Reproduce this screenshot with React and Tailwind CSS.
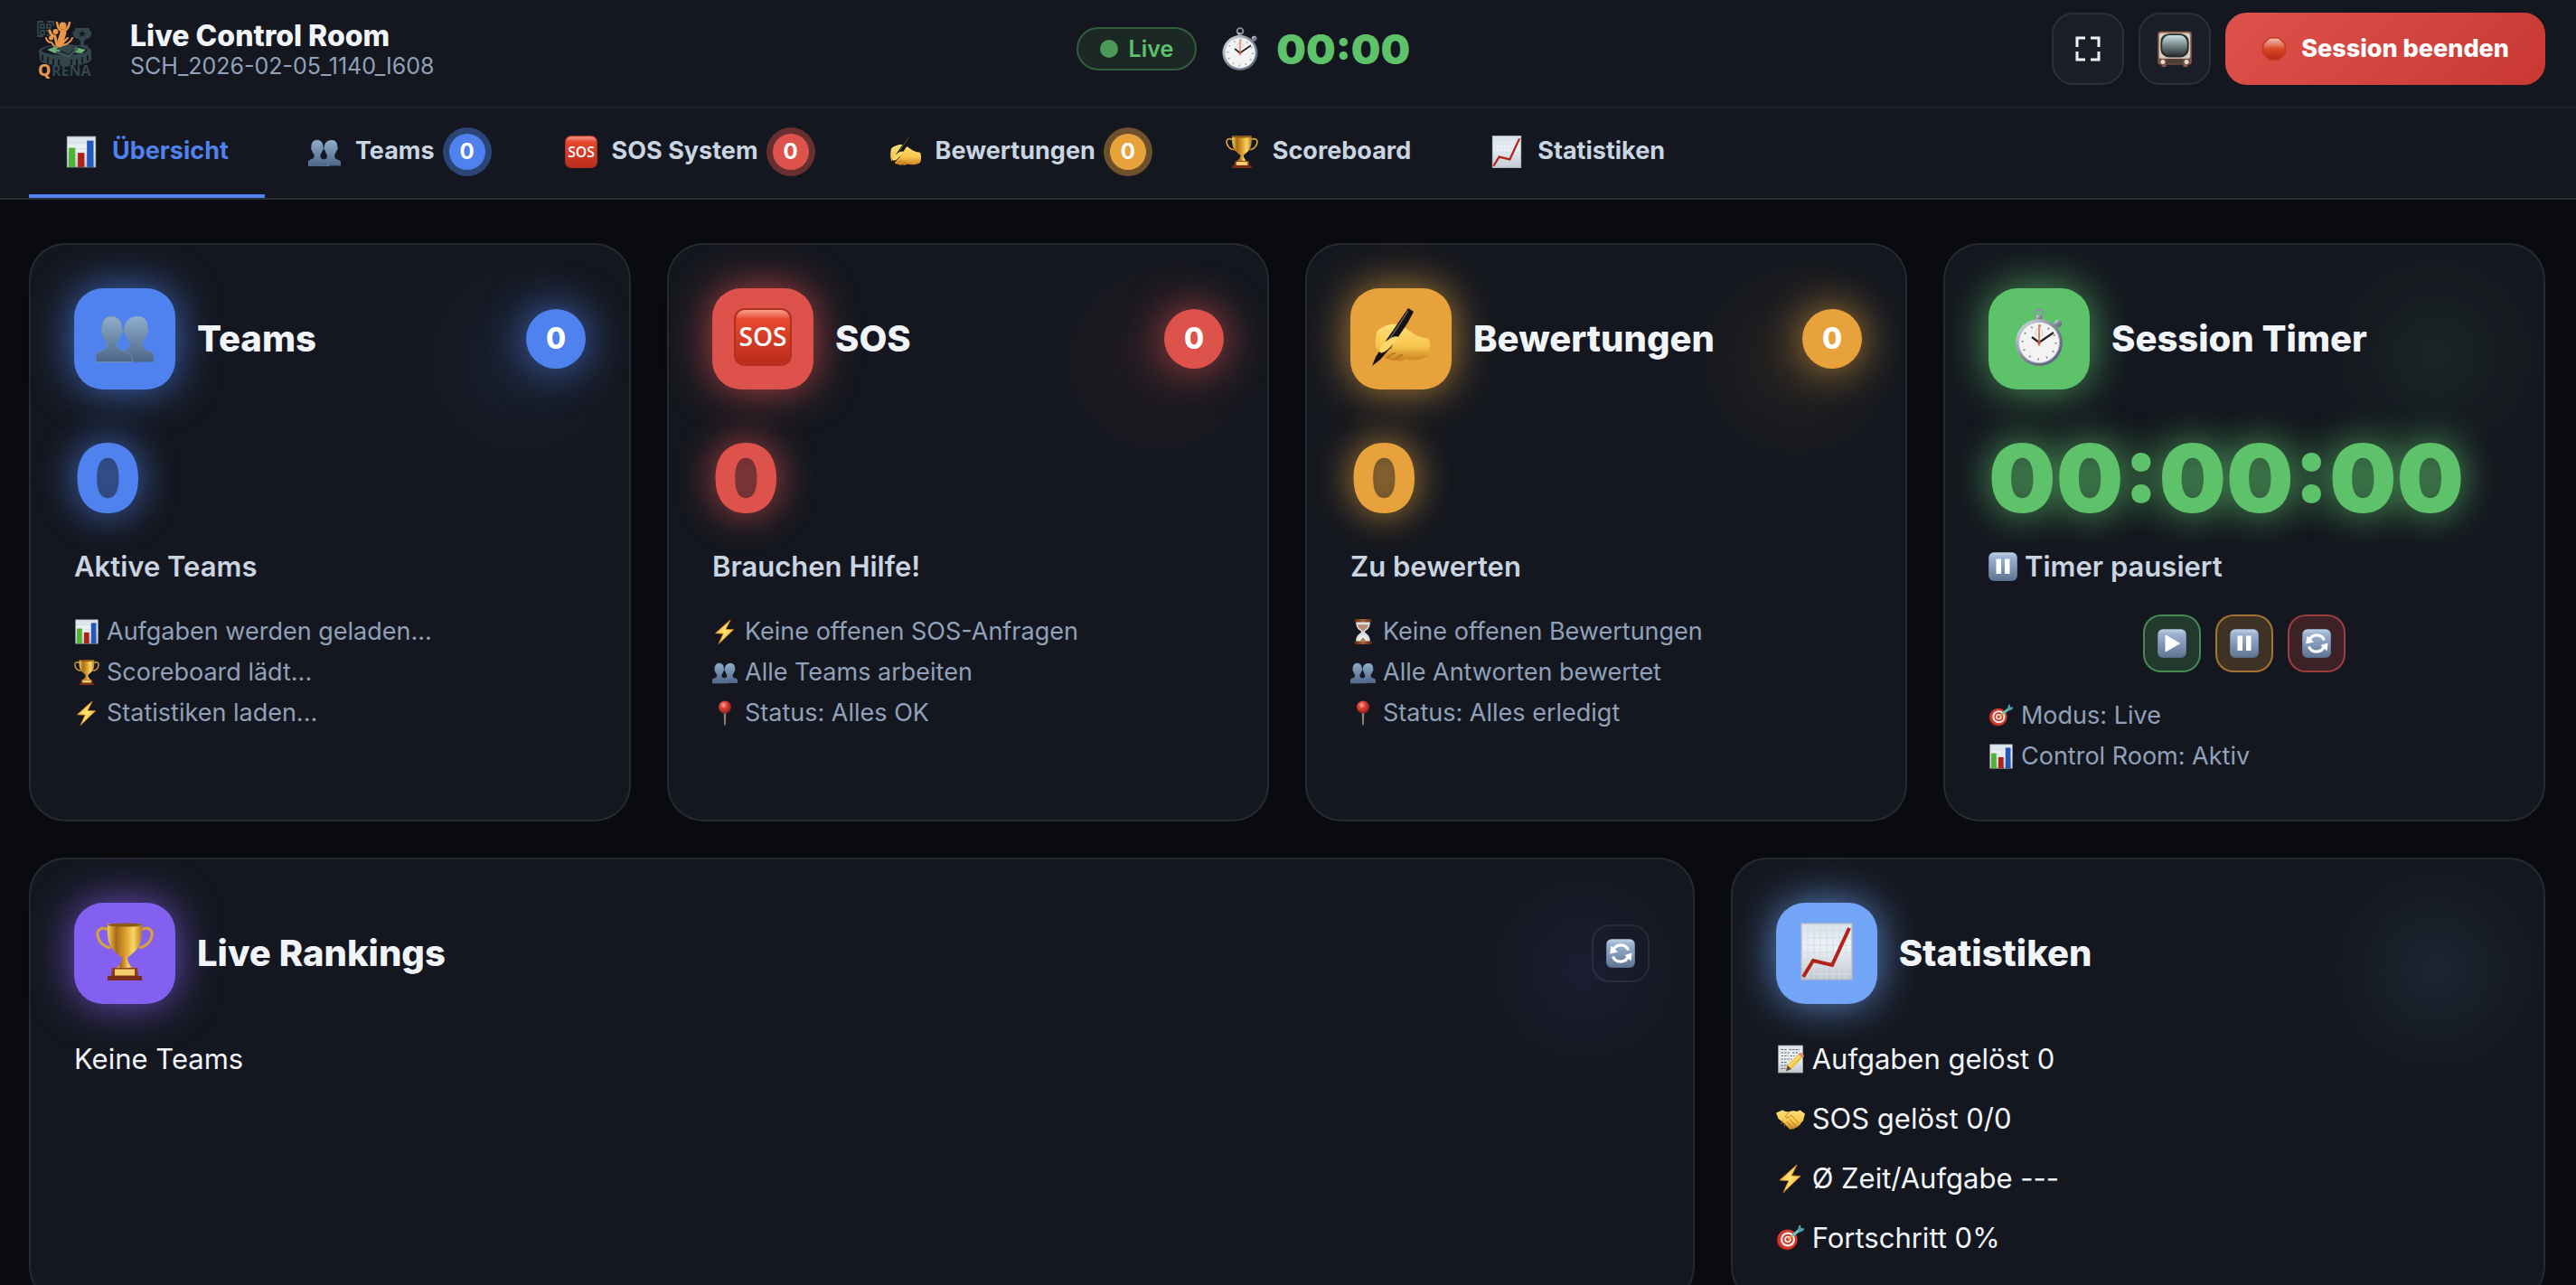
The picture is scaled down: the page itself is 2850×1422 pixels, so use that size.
import React from "react";

// shared gradients for all emoji style icons
const IconDefs = () => (
  <svg className="absolute h-0 w-0" aria-hidden="true">
    <defs>
      <linearGradient id="g-tile" x1="0" y1="0" x2="0" y2="1">
        <stop offset="0" stopColor="#c3d3e6" />
        <stop offset=".16" stopColor="#9db3d0" />
        <stop offset=".55" stopColor="#8097b8" />
        <stop offset="1" stopColor="#617590" />
      </linearGradient>
      <linearGradient id="g-paper" x1="0" y1="0" x2="0" y2="1">
        <stop offset="0" stopColor="#d9e2ea" />
        <stop offset=".4" stopColor="#eef2f6" />
        <stop offset="1" stopColor="#c3c8cf" />
      </linearGradient>
      <linearGradient id="g-people" x1="0" y1="0" x2="0" y2="1">
        <stop offset="0" stopColor="#8fafcb" />
        <stop offset="1" stopColor="#4d6688" />
      </linearGradient>
      <linearGradient id="g-red" x1="0" y1="0" x2="0" y2="1">
        <stop offset="0" stopColor="#f3a08f" />
        <stop offset=".17" stopColor="#e8492f" />
        <stop offset="1" stopColor="#b92c1b" />
      </linearGradient>
      <linearGradient id="g-skin" x1="0" y1="0" x2="0" y2="1">
        <stop offset="0" stopColor="#fde07a" />
        <stop offset=".6" stopColor="#f7c64c" />
        <stop offset="1" stopColor="#c97f22" />
      </linearGradient>
      <linearGradient id="g-gold" x1="0" y1="0" x2="1" y2="0">
        <stop offset="0" stopColor="#f5cf55" />
        <stop offset=".25" stopColor="#a86a17" />
        <stop offset=".5" stopColor="#d99b2b" />
        <stop offset=".75" stopColor="#f8d765" />
        <stop offset="1" stopColor="#b87a1c" />
      </linearGradient>
      <linearGradient id="g-steel" x1="0" y1="0" x2="1" y2="1">
        <stop offset="0" stopColor="#e1e7ee" />
        <stop offset=".5" stopColor="#7e8794" />
        <stop offset="1" stopColor="#4c5a74" />
      </linearGradient>
      <linearGradient id="g-screen" x1="0" y1="0" x2="0" y2="1">
        <stop offset="0" stopColor="#cfe4e4" />
        <stop offset=".5" stopColor="#76878a" />
        <stop offset="1" stopColor="#2c3133" />
      </linearGradient>
      <linearGradient id="g-stop" x1="0" y1="0" x2="0" y2="1">
        <stop offset="0" stopColor="#f1bfb2" />
        <stop offset=".5" stopColor="#d84a28" />
        <stop offset="1" stopColor="#b7280f" />
      </linearGradient>
      <linearGradient id="g-bolt" x1="0" y1="0" x2="1" y2="1">
        <stop offset="0" stopColor="#f29a2e" />
        <stop offset=".5" stopColor="#ffe773" />
        <stop offset="1" stopColor="#ee8a22" />
      </linearGradient>
      <radialGradient id="g-pin" cx=".4" cy=".35" r=".6">
        <stop offset="0" stopColor="#f9aaa0" />
        <stop offset=".45" stopColor="#dd4238" />
        <stop offset="1" stopColor="#9d201d" />
      </radialGradient>
      <linearGradient id="g-wood" x1="0" y1="0" x2="1" y2="0">
        <stop offset="0" stopColor="#4e2410" />
        <stop offset=".5" stopColor="#a5623a" />
        <stop offset="1" stopColor="#4e2410" />
      </linearGradient>
    </defs>
  </svg>
);

const Svg = ({ className, children }) => (
  <svg viewBox="0 0 64 64" className={`shrink-0 ${className}`} aria-hidden="true">
    {children}
  </svg>
);

const BarsIcon = ({ className }) => (
  <Svg className={className}>
    <rect x="4" y="2" width="56" height="60" fill="url(#g-paper)" stroke="#aab4be" strokeWidth="1.5" />
    <path d="M4 14h56M4 26h56M4 38h56M4 50h56" stroke="#c3ccd6" strokeWidth="1" />
    <rect x="7" y="24" width="13" height="38" fill="#4fb434" />
    <rect x="25" y="34" width="13" height="28" fill="#ae2219" />
    <rect x="43" y="10" width="13" height="52" fill="#2257be" />
  </Svg>
);

const PeopleIcon = ({ className }) => (
  <Svg className={className}>
    <path
      d="M46 9c8 0 12 6 11.500 14 1.500 1 .5 6-1.500 6.500-1 4-3 6.500-4 8-1 5 1 8 4 9 5 2 8 2.500 8 6v7H32V47c3-1 6-3 5-9-2-2-3-5-4-9-2-.5-3-5-1.500-6C32 14 38 9 46 9z"
      fill="url(#g-people)"
    />
    <path
      d="M17 9c8 0 12.500 6 12 14 1.500 1 .5 6-1.500 6.500-1 4-3 6.500-4 8-1 5 1 8 4 9 8 2 13 3 13 13H0v-7c0-3.500 4-4.500 8-6 3-1 5-4 4-9-2-2-3-4-4-8-2-.5-3-5.500-1.500-6.500C6 15 10 9 17 9z"
      fill="url(#g-people)"
      stroke="#6e8dae"
      strokeWidth="1"
    />
  </Svg>
);

const SosIcon = ({ className }) => (
  <Svg className={className}>
    <rect x="0" y="0" width="64" height="64" rx="12" fill="#b3301f" />
    <rect x="2" y="2" width="60" height="60" rx="10" fill="url(#g-red)" />
    <text x="32" y="42" textAnchor="middle" fontFamily="'Open Sans', sans-serif" fontWeight="600" fontSize="28" fill="#fff">
      SOS
    </text>
  </Svg>
);

const HandIcon = ({ className }) => (
  <Svg className={className}>
    <path
      d="M5 27c1-4 8-7 15-9 5-1 10 0 15 3 8 5 16 12 25 12 3 0 4 3 4 8 0 7 0 12-3 13-8 4-17 4-24 2-4 3-8 3-10 1-3 2-7 1-8-1-4 1-7-1-7-4-5 0-8-2-7-5-2-6-1-13 0-20z"
      fill="url(#g-skin)"
    />
    <path d="M10 51c3-5 8-7 12-7M17 56c2-4 6-6 9-6M26 57c2-3 5-5 8-5" fill="none" stroke="#b97a20" strokeWidth="2" />
    <path d="M40 0l6 4-7 13-17 25L9 57l-9 7 4-10 12-19z" fill="#15120f" />
    <path d="M40 3L17 38" stroke="#5d5a57" strokeWidth="1.500" />
    <path d="M8 48c0-6 4-10 10-13 4-3 9-5 11-3s-3 6-8 10c-4 5-11 10-13 6z" fill="#fbd768" />
  </Svg>
);

const TrophyIcon = ({ className }) => (
  <Svg className={className}>
    <path
      d="M14 8C6 4 1 8 2 14c1 8 8 13 14 14M50 8c8-4 13 0 12 6-1 8-8 13-14 14"
      fill="none"
      stroke="#d9a236"
      strokeWidth="3"
    />
    <path d="M13 1h38c1 14-1 26-8 31-3 2-5 5-7 6h-8c-2-1-4-4-7-6C14 27 12 15 13 1z" fill="url(#g-gold)" />
    <ellipse cx="32" cy="2.500" rx="19" ry="2" fill="#8a5a17" />
    <path d="M29 37h6c0 5 1 9 6 13H23c5-4 6-8 6-13z" fill="url(#g-gold)" />
    <path d="M18 50h28l1 9H17z" fill="#8e3c1b" />
    <rect x="21" y="51.500" width="22" height="7" fill="#f3cc6c" />
    <path d="M13 59h38v5H13z" fill="#7a2d16" />
  </Svg>
);

const ChartIcon = ({ className }) => (
  <Svg className={className}>
    <rect x="4" y="1" width="56" height="62" fill="url(#g-paper)" stroke="#b3bac3" strokeWidth="1.500" />
    <path
      d="M4 9h56M4 17h56M4 25h56M4 33h56M4 41h56M4 49h56M4 57h56M11 1v62M18 1v62M25 1v62M32 1v62M39 1v62M46 1v62M53 1v62"
      stroke="#d3dde8"
      strokeWidth="1"
    />
    <path d="M6 60l11-18 21 5L57 6" fill="none" stroke="#b3221a" strokeWidth="4" />
  </Svg>
);

const StopwatchIcon = ({ className }) => (
  <Svg className={className}>
    <circle cx="32" cy="6" r="4.500" fill="none" stroke="#8b95a3" strokeWidth="2.500" />
    <rect x="29" y="8" width="6" height="6" fill="url(#g-steel)" />
    <circle cx="53" cy="17" r="4" fill="url(#g-steel)" />
    <path d="M48 22l4-4" stroke="#77828f" strokeWidth="3" />
    <circle cx="32" cy="38" r="26" fill="url(#g-steel)" />
    <circle cx="32" cy="38" r="22.500" fill="#f3f3f3" stroke="#b9c2cf" strokeWidth="1" />
    <circle cx="32" cy="38" r="18.500" fill="none" stroke="#8f8f8f" strokeWidth="2.500" strokeDasharray="1.500 8.190" />
    <circle cx="32" cy="27" r="4" fill="none" stroke="#cfcfcf" strokeWidth="1.200" />
    <path d="M32 42V18" stroke="#e08a5c" strokeWidth="2" />
    <path d="M32 38l-8-6M32 38l16-11" stroke="#222" strokeWidth="2.200" />
    <circle cx="32" cy="38" r="2" fill="#c5562b" />
  </Svg>
);

const TvIcon = ({ className }) => (
  <Svg className={className}>
    <path d="M9 58h8v6H9zM47 58h8v6h-8z" fill="#8a5747" />
    <rect x="2" y="1" width="60" height="59" rx="5" fill="#8d5b4c" />
    <rect x="4.500" y="4" width="55" height="45" rx="4" fill="#d6cfc0" />
    <rect x="7" y="5" width="50" height="42" rx="15" fill="#272b2c" />
    <rect x="10" y="8" width="44" height="36" rx="13" fill="url(#g-screen)" />
    <rect x="5" y="50" width="54" height="9" fill="#6c4b40" />
    <rect x="18" y="50" width="28" height="8" fill="#4a3f39" />
    <circle cx="11" cy="55" r="4" fill="#e5dfd0" />
    <circle cx="53" cy="55" r="4" fill="#e5dfd0" />
  </Svg>
);

const StopIcon = ({ className }) => (
  <Svg className={className}>
    <path d="M20 2h24l18 18v24L44 62H20L2 44V20z" fill="#c93a22" />
    <path d="M21 6h22l15 15v22L43 58H21L6 43V21z" fill="url(#g-stop)" />
  </Svg>
);

const BoltIcon = ({ className }) => (
  <Svg className={className}>
    <path d="M46 2L8 36l20 1-12 26 38-36-20-1z" fill="url(#g-bolt)" stroke="#d98624" strokeWidth="2" />
  </Svg>
);

const PinIcon = ({ className }) => (
  <Svg className={className}>
    <path d="M29 28h6l-1 33c-1 3-3 3-4 0z" fill="#8d8179" />
    <circle cx="32" cy="17" r="16" fill="url(#g-pin)" />
  </Svg>
);

const HourglassIcon = ({ className }) => (
  <Svg className={className}>
    <path d="M14 6h36c0 12-3 18-13 25v3c10 7 13 12 13 24H14c0-12 3-17 13-24v-3C17 24 14 18 14 6z" fill="#dfe0e2" />
    <path d="M18 14h28c-2 7-5 10-12 15l-2 4-2-4c-7-5-10-8-12-15z" fill="#b98d74" />
    <path d="M32 40l13 16H19z" fill="#f5f2ec" />
    <path d="M32 34v12l8 10H24l8-10z" fill="#a9825b" />
    <rect x="9" y="0" width="46" height="8" rx="3" fill="url(#g-wood)" />
    <rect x="9" y="56" width="46" height="8" rx="3" fill="url(#g-wood)" />
  </Svg>
);

const Tile = ({ className, children }) => (
  <Svg className={className}>
    <rect x="0" y="0" width="64" height="64" rx="12" fill="#566b88" />
    <rect x="1" y="1" width="62" height="61" rx="11" fill="url(#g-tile)" />
    {children}
  </Svg>
);

const PauseIcon = ({ className }) => (
  <Tile className={className}>
    <path d="M17 15h11v33H17zM36 15h11v33H36z" fill="#fff" />
  </Tile>
);

const PlayIcon = ({ className }) => (
  <Tile className={className}>
    <path d="M18 14l31 18-31 18z" fill="#fff" stroke="#fff" strokeWidth="2" strokeLinejoin="round" />
  </Tile>
);

const RefreshIcon = ({ className }) => (
  <Tile className={className}>
    <path d="M15 27a18 18 0 0 1 34-2M49 37a18 18 0 0 1-34 2" fill="none" stroke="#fff" strokeWidth="6.500" />
    <path d="M11 16l1 0 14 13-18 4zM57 31l-2 18-14-13z" fill="#fff" />
  </Tile>
);

const DartIcon = ({ className }) => (
  <Svg className={className}>
    <ellipse cx="24" cy="37" rx="23" ry="22" fill="#7c1a12" />
    <circle cx="25" cy="35" r="22" fill="#d13a2c" />
    <circle cx="26" cy="35" r="16" fill="#f3ece8" />
    <circle cx="26" cy="35" r="11.500" fill="#c7382b" />
    <circle cx="26" cy="35" r="7.500" fill="#f3ece8" />
    <circle cx="26" cy="35" r="4" fill="#c7382b" />
    <path d="M27 35l10-9" stroke="#d9a52c" strokeWidth="3.500" />
    <path d="M36 27l17-14" stroke="#6cc4c8" strokeWidth="6" />
    <path d="M48 17l2-12 4-2 1 7 8 1-3 5-9 4z" fill="#4ea3ab" />
  </Svg>
);

const MemoIcon = ({ className }) => (
  <Svg className={className}>
    <rect x="5" y="2" width="54" height="60" fill="url(#g-paper)" stroke="#a6a6a6" strokeWidth="1.500" />
    <path
      d="M11 11h14M29 11h23M11 18h20M36 18h12M11 25h16M31 25h10M11 32h24M11 39h12M11 46h16M11 53h10"
      stroke="#6c6c6c"
      strokeWidth="2"
      strokeDasharray="5 2"
    />
    <path d="M22 59l3-13L49 21l9 8-24 25z" fill="#f2c23c" />
    <path d="M28 49l25-25" stroke="#fbe38a" strokeWidth="3" />
    <path d="M22 59l3-13 9 8z" fill="#5c4a35" />
    <path d="M49 21l5-3c4 0 8 4 8 8l-4 3z" fill="#e3837d" />
  </Svg>
);

const HandshakeIcon = ({ className }) => (
  <Svg className={className}>
    <path
      d="M0 19l14-6c4 2 9 5 16 3 5-2 11-2 16 0l7-3 11 8-4 15-6 7c0 3-3 5-5 4-1 4-4 5-6 4-2 4-5 4-7 3-3 3-7 2-8-1l-14-14-9-7z"
      fill="url(#g-skin)"
    />
    <path
      d="M29 17c-4 4-8 8-8 11 4 4 9 0 12-4l18 18M30 33l14 15M24 38l13 14M16 36c-3 3-5 5-4 8M22 41c-3 3-5 5-3 8"
      fill="none"
      stroke="#b97718"
      strokeWidth="2"
    />
  </Svg>
);

const FullscreenIcon = ({ className }) => (
  <svg viewBox="0 0 28 28" className={className} fill="none" stroke="currentColor" strokeWidth="3" aria-hidden="true">
    <path d="M2 12V2h9M17 2h9v10M26 17v9h-9M11 26H2v-9" />
  </svg>
);

const Logo = ({ className }) => (
  <svg viewBox="0 0 80 80" className={className} role="img" aria-label="QRENA">
    <g fill="none" stroke="#32464c" strokeWidth="1.800">
      <path d="M26 10h-6M16 10h-6v16h6M23 10h4v5" />
      <rect x="13" y="13" width="4" height="4" />
      <rect x="20" y="13" width="4" height="4" />
      <rect x="13" y="20" width="4" height="4" />
      <path d="M19 20h3v3M20 25h3" />
    </g>
    <g fill="#32464c">
      <path d="M51 17h16v3c4-1 3 9-4 9-2 3-2 3-2 7h4v4H53v-4h4c0-4 0-4-2-7-8 0-8-10-4-9z" />
      <path d="M11 42c2-9 57-9 58 0v10c-3 9-54 9-57 0z" />
    </g>
    <path d="M59 19l1 3h3l-2 2 1 3-3-2-3 2 1-3-2-2h3z" fill="#14171f" />
    <path d="M14 42c6-8 45-8 51 0-6 6-45 7-51 0z" fill="#14171f" />
    <path d="M20 41l10-4 8 4-9 4zM51 38l12 3-5 4-8-1z" fill="#6fae74" />
    <path d="M30 40l11-6 13 3-10 9z" fill="#32464c" />
    <path d="M30 42l14 5 10-9v3l-10 9-14-5z" fill="#40575e" />
    <path d="M15 47v6M21 49v7M27 51v7M33 52v6M47 52v6M53 51v7M59 49v7M65 47v6" stroke="#14171f" strokeWidth="1.800" />
    <g fill="#e8964a">
      <circle cx="37.500" cy="14.500" r="4" />
      <circle cx="29.500" cy="21" r="3" />
      <circle cx="24.500" cy="28" r="2.500" />
    </g>
    <g fill="none" stroke="#e8964a" strokeLinecap="round">
      <path d="M31 11c1 6 3 9 6 9 4 0 7-3 8-9" strokeWidth="2.500" />
      <path d="M38 22l-4 13" strokeWidth="7" />
      <path d="M23 20c1 5 3 6 6 6M29 27l2 9" strokeWidth="3" />
      <path d="M19 28c1 4 3 5 6 5l3 4M37 35c2-4 4-5 6-7M38 36c5-1 9-5 10-8" strokeWidth="2" />
    </g>
    <text x="10" y="70" fontFamily="'Noto Sans', sans-serif" fontWeight="800" fontSize="18" fill="#e8964a">
      Q
    </text>
    <text x="25" y="70" fontFamily="'Noto Sans', sans-serif" fontWeight="700" fontSize="16" fill="#32464c">
      RENA
    </text>
  </svg>
);

const tabs = [
  { label: "Übersicht", Icon: BarsIcon, active: true },
  { label: "Teams", Icon: PeopleIcon, count: 0, badge: "bg-[#4f82ee] shadow-[0_0_0_7px_rgba(79,130,238,0.42)]" },
  { label: "SOS System", Icon: SosIcon, count: 0, badge: "bg-[#de524c] shadow-[0_0_0_7px_rgba(222,82,76,0.42)]" },
  { label: "Bewertungen", Icon: HandIcon, count: 0, badge: "bg-[#e8a23c] shadow-[0_0_0_7px_rgba(232,162,60,0.42)]" },
  { label: "Scoreboard", Icon: TrophyIcon },
  { label: "Statistiken", Icon: ChartIcon },
];

const themes = {
  blue: {
    card: "bg-[radial-gradient(circle_120px_at_calc(100%-120px)_128px,rgba(79,130,238,0.08),transparent)]",
    solid: "bg-[#4f82ee] shadow-[0_0_48px_rgba(79,130,238,0.8)]",
    text: "text-[#4f82ee] [text-shadow:0_0_40px_rgba(79,130,238,0.95)]",
  },
  red: {
    card: "bg-[radial-gradient(circle_120px_at_calc(100%-120px)_128px,rgba(222,82,76,0.07),transparent)]",
    solid: "bg-[#de524c] shadow-[0_0_48px_rgba(222,82,76,0.8)]",
    text: "text-[#de524c] [text-shadow:0_0_40px_rgba(222,82,76,0.95)]",
  },
  orange: {
    card: "bg-[radial-gradient(circle_120px_at_calc(100%-120px)_128px,rgba(232,162,60,0.08),transparent)]",
    solid: "bg-[#e8a23c] shadow-[0_0_48px_rgba(232,162,60,0.8)]",
    text: "text-[#e8a23c] [text-shadow:0_0_40px_rgba(232,162,60,0.95)]",
  },
  green: {
    card: "bg-[radial-gradient(circle_120px_at_calc(100%-120px)_122px,rgba(94,194,106,0.08),transparent)]",
    solid: "bg-[#5ec26a] shadow-[0_0_48px_rgba(94,194,106,0.8)]",
    text: "text-[#5ec26a] [text-shadow:0_0_40px_rgba(94,194,106,0.95)]",
  },
  purple: {
    card: "bg-[radial-gradient(circle_120px_at_calc(100%-120px)_122px,rgba(112,90,230,0.09),transparent)]",
    solid: "bg-[#8460f0] shadow-[0_0_48px_rgba(132,96,240,0.8)]",
  },
  sky: {
    card: "bg-[radial-gradient(circle_120px_at_calc(100%-120px)_122px,rgba(94,165,217,0.1),transparent)]",
    solid: "bg-[#72a5f7] shadow-[0_0_48px_rgba(114,165,247,0.8)]",
  },
};

const Card = ({ theme, title, Icon, action, span, children }) => (
  <section className={`rounded-[40px] border-2 border-white/8 bg-[#14171f] p-12 ${span} ${themes[theme].card}`}>
    <div className="flex items-center gap-6">
      <div className={`flex size-28 items-center justify-center rounded-[32px] pb-1 ${themes[theme].solid}`}>
        <Icon className="size-16" />
      </div>
      <h2 className="flex-1 text-[40px] leading-[48px] font-extrabold text-slate-100">{title}</h2>
      {action}
    </div>
    {children}
  </section>
);

const CountBadge = ({ theme, value }) => (
  <span
    className={`flex size-[66px] items-center justify-center rounded-full text-[32px] font-extrabold text-white ${themes[theme].solid}`}
  >
    {value}
  </span>
);

const BigNumber = ({ theme, children }) => (
  <div className={`mt-[42px] text-[105px] leading-[112px] font-black ${themes[theme].text}`}>{children}</div>
);

const CardLabel = ({ children }) => (
  <div className="mt-[18px] flex items-center gap-2 text-[31px] leading-[48px] font-semibold text-slate-300">
    {children}
  </div>
);

const InfoList = ({ items }) => (
  <ul className="mt-[25px] text-[27px] leading-[45px] text-slate-400">
    {items.map(([Icon, text]) => (
      <li key={text} className="flex items-center gap-2">
        <Icon className="size-7" />
        {text}
      </li>
    ))}
  </ul>
);

const StatCard = ({ theme, title, Icon, value, label, items }) => (
  <Card theme={theme} title={title} Icon={Icon} span="col-span-3" action={<CountBadge theme={theme} value={value} />}>
    <BigNumber theme={theme}>{value}</BigNumber>
    <CardLabel>{label}</CardLabel>
    <InfoList items={items} />
  </Card>
);

const IconButton = ({ label, className, children }) => (
  <button
    type="button"
    aria-label={label}
    className={`flex size-16 items-center justify-center rounded-[20px] border-2 ${className}`}
  >
    {children}
  </button>
);

const Header = () => (
  <header className="flex items-center justify-between border-b-2 border-white/4 bg-[#14171f] pt-[14px] pr-[34px] pb-6 pl-8">
    <div className="flex items-center gap-8">
      <Logo className="size-20" />
      <div>
        <h1 className="text-[32px] leading-[38px] font-extrabold text-slate-100">Live Control Room</h1>
        <p className="text-[25px] leading-7 text-slate-400">SCH_2026-02-05_1140_I608</p>
      </div>
    </div>

    <div className="flex items-center gap-6">
      <span className="flex h-12 items-center gap-3 rounded-full border-2 border-[#5ec26a]/35 bg-[#5ec26a]/10 px-6 text-[25px] leading-8 font-semibold text-[#5ec26a]">
        <span className="size-5 rounded-full bg-[#4d9957]" />
        Live
      </span>
      <span className="flex items-center gap-4 text-[46px] leading-none font-black text-[#5ec26a]">
        <StopwatchIcon className="size-12" />
        00:00
      </span>
    </div>

    <div className="flex items-center gap-4">
      <button
        type="button"
        aria-label="Vollbild"
        className="flex size-20 items-center justify-center rounded-3xl border-2 border-white/8 bg-[#1b1e29] text-slate-100"
      >
        <FullscreenIcon className="size-7" />
      </button>
      <button
        type="button"
        aria-label="TV-Ansicht"
        className="flex size-20 items-center justify-center rounded-3xl border-2 border-white/8 bg-[#1b1e29]"
      >
        <TvIcon className="size-10" />
      </button>
      <button
        type="button"
        className="flex h-20 items-center gap-4 rounded-3xl bg-linear-135 from-[#de524c] to-[#c93832] px-10 text-[27px] font-extrabold text-white"
      >
        <StopIcon className="size-7" />
        Session beenden
      </button>
    </div>
  </header>
);

const Nav = () => (
  <nav className="flex gap-2 border-b-2 border-white/10 bg-[#14171f] px-8">
    {tabs.map(({ label, Icon, active, count, badge }) => (
      <button
        key={label}
        type="button"
        className={`flex h-[99px] items-center gap-4 border-b-4 px-10 text-[27px] font-bold ${
          active ? "border-[#4f82ee] text-[#4f82ee]" : "border-transparent text-slate-300"
        }`}
      >
        <Icon className="size-9" />
        {label}
        {badge && (
          <span className={`flex size-10 items-center justify-center rounded-full text-2xl font-bold text-white ${badge}`}>
            {count}
          </span>
        )}
      </button>
    ))}
  </nav>
);

const App = () => {
  return (
    <div className="h-screen overflow-hidden bg-[#0a0b0e] font-['Inter',sans-serif] text-slate-100">
      <IconDefs />
      <Header />
      <Nav />
      <main className="grid grid-cols-12 gap-10 py-12 pr-[34px] pl-8">
        <StatCard
          theme="blue"
          title="Teams"
          Icon={PeopleIcon}
          value={0}
          label="Aktive Teams"
          items={[
            [BarsIcon, "Aufgaben werden geladen..."],
            [TrophyIcon, "Scoreboard lädt..."],
            [BoltIcon, "Statistiken laden..."],
          ]}
        />
        <StatCard
          theme="red"
          title="SOS"
          Icon={SosIcon}
          value={0}
          label="Brauchen Hilfe!"
          items={[
            [BoltIcon, "Keine offenen SOS-Anfragen"],
            [PeopleIcon, "Alle Teams arbeiten"],
            [PinIcon, "Status: Alles OK"],
          ]}
        />
        <StatCard
          theme="orange"
          title="Bewertungen"
          Icon={HandIcon}
          value={0}
          label="Zu bewerten"
          items={[
            [HourglassIcon, "Keine offenen Bewertungen"],
            [PeopleIcon, "Alle Antworten bewertet"],
            [PinIcon, "Status: Alles erledigt"],
          ]}
        />
        <Card theme="green" title="Session Timer" Icon={StopwatchIcon} span="col-span-3">
          <BigNumber theme="green">00:00:00</BigNumber>
          <CardLabel>
            <PauseIcon className="size-8" />
            Timer pausiert
          </CardLabel>
          <div className="mt-[29px] flex justify-center gap-4">
            <IconButton label="Start" className="border-[#5ec26a]/60 bg-[#5ec26a]/20">
              <PlayIcon className="size-8" />
            </IconButton>
            <IconButton label="Pause" className="border-[#e8a23c]/60 bg-[#e8a23c]/20">
              <PauseIcon className="size-8" />
            </IconButton>
            <IconButton label="Zurücksetzen" className="border-[#de524c]/60 bg-[#de524c]/20">
              <RefreshIcon className="size-8" />
            </IconButton>
          </div>
          <InfoList
            items={[
              [DartIcon, "Modus: Live"],
              [BarsIcon, "Control Room: Aktiv"],
            ]}
          />
        </Card>

        <Card
          theme="purple"
          title="Live Rankings"
          Icon={TrophyIcon}
          span="col-span-8"
          action={
            <IconButton label="Aktualisieren" className="border-white/8">
              <RefreshIcon className="size-8" />
            </IconButton>
          }
        >
          <p className="mt-[39px] text-[31px] leading-[44px]">Keine Teams</p>
        </Card>
        <Card theme="sky" title="Statistiken" Icon={ChartIcon} span="col-span-4">
          <ul className="mt-[39px] flex flex-col gap-[22px] text-[31px] leading-[44px]">
            {[
              [MemoIcon, "Aufgaben gelöst 0"],
              [HandshakeIcon, "SOS gelöst 0/0"],
              [BoltIcon, "Ø Zeit/Aufgabe ---"],
              [DartIcon, "Fortschritt 0%"],
            ].map(([Icon, text]) => (
              <li key={text} className="flex items-center gap-2">
                <Icon className="size-8" />
                {text}
              </li>
            ))}
          </ul>
        </Card>
      </main>
    </div>
  );
};

export default App;
